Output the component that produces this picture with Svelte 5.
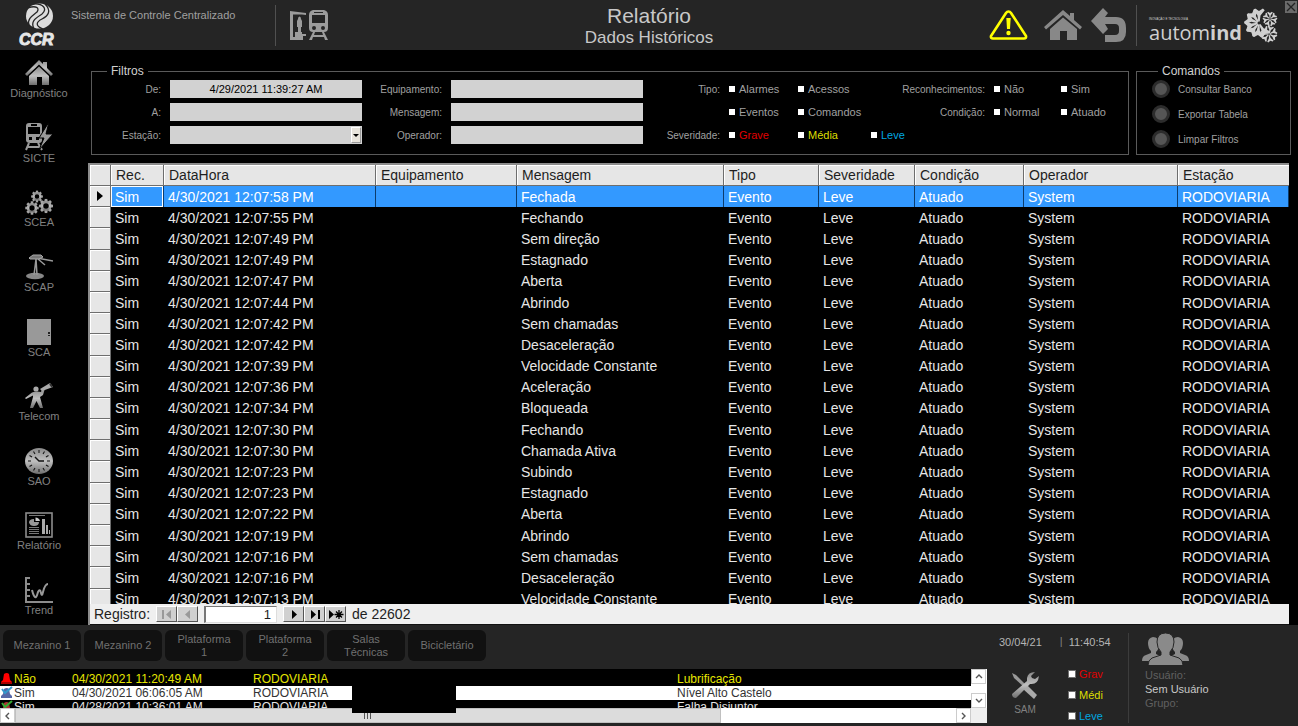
<script>
    let menu = [
        { id: "casa", label: "Diagnóstico" },
        { id: "sicte", label: "SICTE" },
        { id: "scea", label: "SCEA" },
        { id: "scap", label: "SCAP" },
        { id: "sca", label: "SCA" },
        { id: "telecom", label: "Telecom" },
        { id: "sao", label: "SAO" },
        { id: "relatorio", label: "Relatório" },
        { id: "trend", label: "Trend" }
    ]

    let colunas = [
        { nome: "Rec.", largura: 53 },
        { nome: "DataHora", largura: 212 },
        { nome: "Equipamento", largura: 141 },
        { nome: "Mensagem", largura: 207 },
        { nome: "Tipo", largura: 95 },
        { nome: "Severidade", largura: 96 },
        { nome: "Condição", largura: 109 },
        { nome: "Operador", largura: 154 },
        { nome: "Estação", largura: 111 }
    ]

    let eventos = [
        ["12:07:58", "Fechada"],
        ["12:07:55", "Fechando"],
        ["12:07:49", "Sem direção"],
        ["12:07:49", "Estagnado"],
        ["12:07:47", "Aberta"],
        ["12:07:44", "Abrindo"],
        ["12:07:42", "Sem chamadas"],
        ["12:07:42", "Desaceleração"],
        ["12:07:39", "Velocidade Constante"],
        ["12:07:36", "Aceleração"],
        ["12:07:34", "Bloqueada"],
        ["12:07:30", "Fechando"],
        ["12:07:30", "Chamada Ativa"],
        ["12:07:23", "Subindo"],
        ["12:07:23", "Estagnado"],
        ["12:07:22", "Aberta"],
        ["12:07:19", "Abrindo"],
        ["12:07:16", "Sem chamadas"],
        ["12:07:16", "Desaceleração"],
        ["12:07:13", "Velocidade Constante"]
    ]
    let linhas = eventos.map(([hora, msg]) => [
        "Sim", "4/30/2021 " + hora + " PM", "", msg, "Evento", "Leve", "Atuado", "System", "RODOVIARIA"
    ])
    let selecionada = $state(0)

    let areas = ["Mezanino 1", "Mezanino 2", "Plataforma 1", "Plataforma 2", "Salas Técnicas", "Bicicletário"]

    let alarmes = [
        { rec: "Não", data: "04/30/2021 11:20:49 AM", estacao: "RODOVIARIA", msg: "Lubrificação", tipo: "ativo" },
        { rec: "Sim", data: "04/30/2021 06:06:05 AM", estacao: "RODOVIARIA", msg: "Nível Alto Castelo", tipo: "marcado" },
        { rec: "Sim", data: "04/28/2021 10:36:01 AM", estacao: "RODOVIARIA", msg: "Falha Disjuntor", tipo: "normal" }
    ]

    let de = $state("4/29/2021 11:39:27 AM")
    let registro = $state("1")
</script>

{#snippet check(texto, cor)}
    <label class="check {cor}"><input type="checkbox">{texto}</label>
{/snippet}

{#snippet engrenagem(x, y, s)}
    <g transform="translate({x} {y}) scale({s})">
        <circle r="5" fill="none" stroke="url(#metal)" stroke-width="3.4" />
        {#each [0, 45, 90, 135, 180, 225, 270, 315] as a}
            <rect x="-1.6" y="-8.4" width="3.2" height="3" fill="#a5a5a5" transform="rotate({a})" />
        {/each}
    </g>
{/snippet}

{#snippet flor(x, y, s, angulos)}
    <g transform="translate({x} {y}) scale({s})">
        {#each angulos as a}
            <path d="M-.5 -1L-1 -5L-3.800 -8.500L-2.600 -9.600L0 -8L2.600 -9.600L3.800 -8.500L1 -5L.5 -1Z" transform="rotate({a})" />
        {/each}
    </g>
{/snippet}

{#snippet icone(id)}
    {#if id == "casa"}
        <svg width="28" height="26" viewBox="0 0 28 26">
            <path fill="url(#metal)" d="M14 0L18 4V2H22V8L28 14L26 16L14 4.5L2 16L0 14Z" />
            <path fill="url(#metal)" d="M14 6.5L24 16V25H17V17H12V25H4V16Z" />
        </svg>
    {:else if id == "sicte"}
        <svg width="28" height="29" viewBox="0 0 28 29">
            <path fill="#999" fill-rule="evenodd" d="M4 1H14Q17 1 17 4V18Q17 21 14 21H5Q1 21 1 18V4Q1 1 4 1ZM3 5V12H15V5ZM6 2V4H12V2ZM4 15V18H7V15ZM11 15V18H14V15Z" />
            <path stroke="#999" stroke-width="2" d="M4 21L1 28M13 21L17 28M3 25H15" />
            <path fill="#999" stroke="#000" stroke-width="1" d="M24 0L14 16H19L14 28L28 12H21Z" />
        </svg>
    {:else if id == "scea"}
        <svg width="28" height="25" viewBox="0 0 28 25">
            {@render engrenagem(12, 6.5, 0.7)}
            {@render engrenagem(7, 18, 0.8)}
            {@render engrenagem(21, 16, 0.84)}
        </svg>
    {:else if id == "scap"}
        <svg width="28" height="26" viewBox="0 0 28 26">
            <ellipse cx="10" cy="22" rx="9" ry="3.3" fill="#888" />
            <path stroke="#999" fill="none" stroke-width="1.5" d="M9 21L11 5M12 21L11 5M12 4L28 7M13 5L20 11" />
            <path fill="#777" stroke="#aaa" d="M4 4L8 1H16L18 3L14 5H5Z" />
        </svg>
    {:else if id == "sca"}
        <svg width="24" height="26" viewBox="0 0 24 26">
            <rect width="24" height="26" fill="#999" />
            <path fill="#222" d="M21 13h2v2h-2zM21 16h2v1h-2z" />
        </svg>
    {:else if id == "telecom"}
        <svg width="28" height="26" viewBox="0 0 28 26">
            <circle cx="11" cy="6" r="2.6" fill="#aaa" />
            <path fill="url(#metal)" d="M0 15L7 9.5Q11 8 16 9L17 6L19.500 7L18 12L15 14L18 25H15L11.500 18L8 25H5L8 14V12.500L1 16Z" />
            <path fill="#aaa" d="M15 6L25 0L28 4L17 8Z" />
            <ellipse cx="26" cy="2.5" rx="1" ry="2.3" fill="#333" transform="rotate(-35 26 2.500)" />
        </svg>
    {:else if id == "sao"}
        <svg width="28" height="26" viewBox="0 0 28 26">
            <ellipse cx="14" cy="13" rx="14" ry="13" fill="url(#metal)" />
            {#each [0, 30, 60, 90, 120, 150, 180, 210, 240, 270, 300, 330] as a}
                <path d="M14 2V5" stroke="#111" transform="rotate({a} 14 13)" />
            {/each}
            <path d="M10 9L14 13H19" stroke="#111" stroke-width="1.400" fill="none" />
        </svg>
    {:else if id == "relatorio"}
        <svg width="28" height="26" viewBox="0 0 28 26">
            <rect x="1" y="1" width="26" height="24" fill="none" stroke="#8c8c8c" stroke-width="1.600" />
            <path stroke="#777" d="M4 3.500H20M4 15.500H14M4 17.500H14M4 19.500H14M4 21.500H14" />
            <path fill="#999" d="M9 7Q4 7 4 10.500Q5 14 9 14Q14 14 14 10H9Z" />
            <path fill="#ccc" d="M10.500 5.500Q14 5.500 15 9H10.500Z" />
            <path fill="#aaa" d="M17 7H20V22H17ZM21 13H23V22H21ZM24 18H25V22H24Z" />
        </svg>
    {:else if id == "trend"}
        <svg width="28" height="26" viewBox="0 0 28 26">
            <path stroke="#8c8c8c" stroke-width="2" fill="none" d="M1 0V25H28M1 1H5M1 7H5M1 13H5M1 19H5" />
            <path stroke="#999" stroke-width="2" fill="none" d="M7 13Q9 21 11 20Q12 19 13 15Q15 11 16 16Q17 20 18 15Q20 7 23 7" />
        </svg>
    {/if}
{/snippet}

<svg class="defs" width="0" height="0" aria-hidden="true">
    <linearGradient id="metal" x1="0" y1="0" x2="0" y2="1">
        <stop offset="0" stop-color="#8a8a8a" />
        <stop offset="0.5" stop-color="#c0c0c0" />
        <stop offset="1" stop-color="#6e6e6e" />
    </linearGradient>
</svg>

<div class="tela">
    <header>
        <div class="marca">
            <svg width="40" height="44" viewBox="0 0 40 44" aria-label="CCR">
                <ellipse cx="21.500" cy="13" rx="13.500" ry="12.600" fill="#dcdcdc" />
                <g fill="none" stroke="#252525" stroke-width="1.300">
                    <path d="M15 1C25 0 30 6 24 11C18 15 12 18 16 26" />
                    <path d="M27 1C34 8 30 13 24 16C18 19 17 23 25 26" />
                    <path d="M10 5C18 2 22 5 19 9C14 13 9 16 11 22" />
                </g>
                <text x="1" y="42" font-size="16" class="ccr">CCR</text>
            </svg>
            <span>Sistema de Controle Centralizado</span>
        </div>
        <div class="estacao">
            <svg width="39" height="32" viewBox="0 0 39 32">
                <path fill="#9c9c9c" fill-rule="evenodd" d="M0 1L16 3V5L12 4.500H3V27H5V22H12V24H16V26H13V30H0Z" />
                <path fill="#9c9c9c" d="M8 9Q8 6.500 9.500 6.500Q11 6.500 11 9L12 11V17H11V22H8V17H7V11Z" />
                <path fill="#9c9c9c" fill-rule="evenodd" d="M23 0H34Q38 1 38 5V18Q38 22 34 22L38 30H35L34 27H23L22 30H19L23 22Q19 22 19 18V5Q19 1 23 0ZM22 5V13H35V5ZM24 2V3H33V2ZM24 16A2 2 0 1 0 24 20A2 2 0 1 0 24 16ZM33 16A2 2 0 1 0 33 20A2 2 0 1 0 33 16ZM25 22L24 25H33L32 22Z" />
            </svg>
        </div>
        <div class="titulo">
            <h1>Relatório</h1>
            <h2>Dados Históricos</h2>
        </div>
        <nav class="acoes">
            <button class="alerta" aria-label="Alarmes">
                <svg width="39" height="32" viewBox="0 0 39 32">
                    <path d="M19.500 2.500Q21 2.500 22 4L37 27Q37.500 29.500 35 29.500H4Q1.500 29.500 2 27L17 4Q18 2.500 19.500 2.500Z" fill="none" stroke="#ff0" stroke-width="2.600" />
                    <path d="M17.300 9H21.700L21 20H18Z" fill="#ff0" />
                    <circle cx="19.500" cy="24" r="2.200" fill="#ff0" />
                </svg>
            </button>
            <button aria-label="Início">
                <svg width="38" height="30" viewBox="0 0 38 30" fill="#888">
                    <path d="M19 0L26 6V3H30V10L38 17L36 19.500L19 5L2 19.500L0 17Z" />
                    <path d="M19 7.500L33 19V30H23V21H16V30H6V19Z" />
                </svg>
            </button>
            <button class="voltar" aria-label="Voltar">
                <svg width="36" height="35" viewBox="0 0 36 35" fill="#888">
                    <path d="M12 0L17 5L14 9H25Q35 9 35 20V24Q35 34 25 34H14V27H24Q28 27 28 23V20Q28 16 24 16H14L17 21L12 26L0 13Z" />
                </svg>
            </button>
            <div class="automind">
                <div>
                    <small>INOVAÇÃO E TECNOLOGIA</small>
                    <p>autom<b>ind</b></p>
                </div>
                <svg width="36" height="36" viewBox="0 0 36 36" fill="#d0d0d0">
                    {@render flor(17, 16, 1.5, [150, 185, 220, 255, 290, 325, 0])}
                    {@render flor(28, 12, 0.75, [0, 51, 103, 154, 206, 257, 309])}
                    {@render flor(27, 27, 0.85, [15, 66, 118, 169, 221, 272, 324])}
                </svg>
            </div>
        </nav>
        <button class="fechar" aria-label="Fechar">
            <svg width="12" height="12" viewBox="0 0 12 12"><path d="M2 2L10 10M10 2L2 10" stroke="#222" stroke-width="1.300" /></svg>
        </button>
    </header>

    <div class="corpo">
        <nav class="menu">
            {#each menu as item}
                <button>
                    {@render icone(item.id)}
                    <span>{item.label}</span>
                </button>
            {/each}
        </nav>

        <main>
            <div class="topo">
                <fieldset class="filtros">
                    <legend>Filtros</legend>
                    <div class="campos">
                        <label for="de">De:</label>
                        <input id="de" class="data" type="text" bind:value={de}>
                        <label for="a">A:</label>
                        <input id="a" class="data" type="text">
                        <label for="est">Estação:</label>
                        <div class="combo">
                            <select id="est"><option></option></select>
                            <span class="seta"></span>
                        </div>
                    </div>
                    <div class="campos meio">
                        <label for="eq">Equipamento:</label>
                        <input id="eq" type="text">
                        <label for="msg">Mensagem:</label>
                        <input id="msg" type="text">
                        <label for="op">Operador:</label>
                        <input id="op" type="text">
                    </div>
                    <div class="opcoes tipos">
                        <span class="rotulo">Tipo:</span>
                        {@render check("Alarmes", "")}
                        {@render check("Acessos", "")}
                        <span></span>
                        <span></span>
                        {@render check("Eventos", "")}
                        {@render check("Comandos", "")}
                        <span></span>
                        <span class="rotulo">Severidade:</span>
                        {@render check("Grave", "grave")}
                        {@render check("Média", "media")}
                        {@render check("Leve", "leve")}
                    </div>
                    <div class="opcoes estados">
                        <span class="rotulo">Reconhecimentos:</span>
                        {@render check("Não", "")}
                        {@render check("Sim", "")}
                        <span class="rotulo">Condição:</span>
                        {@render check("Normal", "")}
                        {@render check("Atuado", "")}
                    </div>
                </fieldset>

                <fieldset class="comandos">
                    <legend>Comandos</legend>
                    <button><i></i>Consultar Banco</button>
                    <button><i></i>Exportar Tabela</button>
                    <button><i></i>Limpar Filtros</button>
                </fieldset>
            </div>

            <div class="grade">
                <div class="rolagem">
                    <table>
                        <colgroup>
                            <col style="width: 21px">
                            {#each colunas as c}
                                <col style="width: {c.largura}px">
                            {/each}
                        </colgroup>
                        <thead>
                            <tr>
                                <th></th>
                                {#each colunas as c}
                                    <th>{c.nome}</th>
                                {/each}
                            </tr>
                        </thead>
                        <tbody>
                            {#each linhas as linha, i}
                                <tr class:sel={i == selecionada} onclick={() => (selecionada = i)}>
                                    <th>{#if i == selecionada}<span class="ponteiro"></span>{/if}</th>
                                    {#each linha as valor}
                                        <td>{valor}</td>
                                    {/each}
                                </tr>
                            {/each}
                        </tbody>
                    </table>
                </div>
                <div class="navegador">
                    <label for="reg">Registro:</label>
                    <div class="grupo">
                        <button disabled aria-label="Primeiro"><svg width="12" height="9" viewBox="0 0 12 9"><path d="M1 0h2v9H1zM10 0v9L5 4.500z" /></svg></button>
                        <button disabled aria-label="Anterior"><svg width="12" height="9" viewBox="0 0 12 9"><path d="M8 0v9L3 4.500z" /></svg></button>
                    </div>
                    <input id="reg" type="text" bind:value={registro}>
                    <div class="grupo">
                        <button aria-label="Próximo"><svg width="12" height="9" viewBox="0 0 12 9"><path d="M4 0v9L9 4.500z" /></svg></button>
                        <button aria-label="Último"><svg width="12" height="9" viewBox="0 0 12 9"><path d="M2 0v9L7 4.500zM9 0h2v9H9z" /></svg></button>
                        <button aria-label="Novo"><svg width="16" height="9" viewBox="0 0 16 9"><path d="M1 0v9L6 4.500z" /><path d="M11 0V9M6.500 4.500H15.500M8 1.500L14 7.500M14 1.500L8 7.500" stroke="#000" stroke-width="1.300" /></svg></button>
                    </div>
                    <span>de 22602</span>
                </div>
            </div>
        </main>
    </div>

    <footer>
        <div class="esquerda">
            <div class="areas">
                {#each areas as area}
                    <button>{area}</button>
                {/each}
            </div>
            <div class="alarmes">
                <div class="lista">
                    {#each alarmes as al}
                        <div class="alarme {al.tipo}">
                            <svg width="13" height="13" viewBox="0 0 13 13">
                                {#if al.tipo == "ativo"}
                                    <path fill="#f00" d="M4 2Q7 0 9 2L10 8L12 10V12H1V10L3 8Z" /><path fill="#a00" d="M1 10H12V12H1Z" />
                                {:else}
                                    <path fill={al.tipo == "marcado" ? "#5668a8" : "#a33"} d="M4 3Q7 1 9 3L10 8L12 10V12H1V10L3 8Z" />
                                    <path fill="none" stroke={al.tipo == "marcado" ? "#39c" : "#3a3"} stroke-width="2" d="M2 3L5 7L12 1" />
                                {/if}
                            </svg>
                            <span>{al.rec}</span>
                            <span>{al.data}</span>
                            <span>{al.estacao}</span>
                            <span>{al.msg}</span>
                        </div>
                    {/each}
                </div>
                <div class="vertical">
                    <button aria-label="Subir"><svg width="8" height="5" viewBox="0 0 8 5"><path d="M1 4L4 1L7 4" /></svg></button>
                    <button aria-label="Descer"><svg width="8" height="5" viewBox="0 0 8 5"><path d="M1 1L4 4L7 1" /></svg></button>
                </div>
                <div class="horizontal">
                    <button aria-label="Esquerda"><svg width="5" height="8" viewBox="0 0 5 8"><path d="M4 1L1 4L4 7" /></svg></button>
                    <div class="trilho"><div class="polegar"><i></i></div></div>
                    <button aria-label="Direita"><svg width="5" height="8" viewBox="0 0 5 8"><path d="M1 1L4 4L1 7" /></svg></button>
                </div>
                <div class="canto"></div>
                <div class="tarja"></div>
            </div>
        </div>

        <div class="direita">
            <div class="relogio"><span>30/04/21</span><span class="barra">|</span><span>11:40:54</span></div>
            <button class="sam">
                <svg width="29" height="28" viewBox="0 0 29 28">
                    <path fill="#999" d="M1 1L5 3L15 13L13 15L3 6Z" />
                    <path fill="#aaa" d="M15 12L26 23L23 27L12 17Z" />
                    <path fill="url(#metal)" d="M28 4L24 7L21 6L20 4L24 0Q17 0 16 6V9L1 22Q1 26 5 26L19 12Q27 13 28 4Z" />
                </svg>
                <span>SAM</span>
            </button>
            <div class="niveis">
                {@render check("Grav", "grave")}
                {@render check("Médi", "media")}
                {@render check("Leve", "leve")}
            </div>
            <div class="usuario">
                <svg width="47" height="33" viewBox="0 0 47 33" fill="#8a8a8a">
                    <path d="M11 4Q17 4 17 11Q17 16 14 19V21L20 24V28H0Q0 23 4 22L9 20V18Q6 15 6 10Q6 5 11 4Z" />
                    <path d="M36 4Q41 5 41 10Q41 15 38 18V20L43 22Q47 23 47 28H27V24L33 21V19Q30 16 30 11Q30 4 36 4Z" />
                    <path stroke="#252525" d="M23.500 0Q32 0 32 9Q32 15 28 19V22L37 25Q41 27 41 32.500H6Q6 27 10 25L19 22V19Q15 15 15 9Q15 0 23.500 0Z" />
                </svg>
                <span>Usuário:</span>
                <strong>Sem Usuário</strong>
                <span>Grupo:</span>
            </div>
        </div>
    </footer>
</div>

<style>
    :global(body){
        margin: 0;
        background-color: black;
    }
    .tela{
        height: 100vh;
        min-height: 640px;
        display: flex;
        flex-direction: column;
        background-color: black;
        color: #a0a0a0;
        font-family: "Liberation Sans", Arial, sans-serif;
        font-size: 11px;
    }
    .tela *{
        box-sizing: border-box;
    }
    .defs{
        position: absolute;
    }
    svg{
        display: block;
        flex: none;
    }
    button, input, select{
        font: inherit;
        color: inherit;
        border: none;
        border-radius: 0;
        padding: 0;
        margin: 0;
        background: none;
    }

    /* cabeçalho */
    header{
        position: relative;
        display: grid;
        grid-template-columns: 1fr auto 1fr;
        height: 50px;
        flex: none;
        background-color: #252525;
    }
    .marca{
        grid-area: 1 / 1;
        display: flex;
        gap: 13px;
        padding: 3px 0 0 18px;
    }
    .marca span{
        padding-top: 6px;
    }
    .ccr{
        font-weight: bold;
        font-style: italic;
        fill: #e6e6e6;
        stroke: #e6e6e6;
    }
    .estacao{
        grid-area: 1 / 1;
        align-self: center;
        margin: 0 0 0 275px;
        padding: 5px 0 4px 14px;
        border-left: 1px solid #505050;
    }
    .titulo{
        grid-area: 1 / 2;
        text-align: center;
        color: #c8c8c8;
        padding-top: 4px;
    }
    h1, h2{
        margin: 0;
        font-weight: normal;
    }
    h1{
        font-size: 21px;
        line-height: 24px;
    }
    h2{
        font-size: 17px;
        line-height: 20px;
    }
    .acoes{
        grid-area: 1 / 3;
        display: flex;
        justify-content: flex-end;
        align-items: center;
        padding-right: 20px;
    }
    .alerta{
        margin-right: 16px;
    }
    .voltar{
        margin: 0 9px;
    }
    .automind{
        display: flex;
        align-items: center;
        border-left: 1px solid #505050;
        padding-left: 12px;
        height: 41px;
        color: #d0d0d0;
    }
    .automind small{
        display: block;
        font-size: 3px;
        line-height: 4px;
        padding-top: 12px;
    }
    .automind p{
        margin: 0;
        font-family: "Open Sans", sans-serif;
        font-size: 20px;
        line-height: 24px;
    }
    .fechar{
        position: absolute;
        top: 1px;
        right: 1px;
        background-color: #6a6a6a;
    }

    .corpo{
        flex: 1;
        min-height: 0;
        display: flex;
    }
    .menu{
        width: 88px;
        flex: none;
        display: flex;
        flex-direction: column;
        justify-content: space-between;
        padding: 4px 10px 8px 0;
    }
    .menu button{
        height: 46px;
        display: flex;
        flex-direction: column;
        align-items: center;
        justify-content: flex-end;
        color: #808080;
    }
    .menu span{
        line-height: 14px;
    }

    main{
        flex: 1;
        min-width: 0;
        display: flex;
        flex-direction: column;
        padding: 14px 7px 0 0;
    }
    .topo{
        display: flex;
        gap: 7px;
        padding-left: 3px;
        margin-bottom: 8px;
    }
    fieldset{
        min-width: 0;
        margin: 0;
        border: 1px solid #5a5a5a;
        padding: 2px 0 10px;
    }
    legend{
        font-size: 12px;
        line-height: 14px;
        color: #d0d0d0;
        padding: 0 4px;
    }
    .filtros{
        flex: 1;
        display: flex;
    }
    .filtros legend{
        margin-left: 15px;
    }
    .campos{
        flex: 1 0 78px;
        display: grid;
        grid-template-columns: 69px 1fr;
        grid-auto-rows: 18px;
        gap: 5px 9px;
        align-items: center;
    }
    .meio{
        flex-basis: 89px;
        grid-template-columns: 80px 1fr;
    }
    .campos label, .rotulo{
        font-size: 10px;
        text-align: right;
        white-space: nowrap;
    }
    .campos input, .campos select{
        display: block;
        width: 100%;
        height: 18px;
        min-width: 0;
        color: black;
        background-color: #d2d2d2;
        appearance: none;
    }
    .campos .data{
        text-align: center;
    }
    .combo{
        position: relative;
    }
    .seta{
        position: absolute;
        top: 1px;
        right: 1px;
        bottom: 1px;
        width: 10px;
        background-color: #e8e4dc;
        border: 1px solid #999;
        border-top-color: white;
        border-left-color: white;
        pointer-events: none;
    }
    .seta::after{
        content: "";
        position: absolute;
        top: 6px;
        left: 1px;
        border: 3px solid transparent;
        border-top-color: black;
        border-bottom: none;
    }
    .opcoes{
        display: grid;
        grid-auto-rows: 18px;
        row-gap: 5px;
        align-items: center;
    }
    .opcoes .rotulo{
        padding-right: 9px;
    }
    .tipos{
        grid-template-columns: 86px 69px 73px 31px;
    }
    .estados{
        grid-template-columns: 92px 67px 67px;
    }
    .check{
        display: flex;
        align-items: center;
        gap: 4px;
        white-space: nowrap;
    }
    .check input{
        appearance: none;
        flex: none;
        width: 6px;
        height: 6px;
        background-color: white;
    }
    .check input:checked{
        box-shadow: inset 0 0 0 2px #333;
    }
    .grave{
        color: #e00000;
    }
    .media{
        color: #dede00;
    }
    .leve{
        color: #00a8e0;
    }
    .comandos{
        width: 155px;
        flex: none;
        display: flex;
        flex-direction: column;
        gap: 7px;
        padding-bottom: 6px;
    }
    .comandos legend{
        margin-left: 21px;
    }
    .comandos button{
        display: flex;
        align-items: center;
        gap: 8px;
        padding-left: 15px;
        font-size: 10px;
        height: 18px;
    }
    .comandos i{
        width: 18px;
        height: 18px;
        border-radius: 50%;
        background-color: #555;
        border: 3px solid #2c2c2c;
    }

    /* grade de eventos */
    .grade{
        flex: 1;
        min-height: 0;
        display: flex;
        flex-direction: column;
        margin-right: 2px;
        border: 2px solid #8c8c8c;
        border-right: none;
        border-bottom: none;
    }
    .rolagem{
        flex: 1;
        min-height: 0;
        overflow: hidden;
    }
    table{
        width: 100%;
        height: 445px;
        table-layout: fixed;
        border-collapse: separate;
        border-spacing: 0;
        font-size: 14px;
        line-height: 18px;
        color: #e6e6e6;
    }
    th, td{
        height: 21px;
        padding: 0 0 0 4px;
        text-align: left;
        font-weight: normal;
        white-space: nowrap;
    }
    th{
        background-color: #e6e6e6;
        color: #1e1e1e;
        padding-left: 5px;
        border-right: 1px solid #6e6e6e;
        border-bottom: 1px solid #6e6e6e;
        box-shadow: inset 1px 1px white;
    }
    thead th:last-child{
        border-right: none;
    }
    .sel td{
        background-color: #3399ff;
        color: white;
        border-right: 1px solid #0c3c6c;
    }
    .sel td:nth-child(2){
        box-shadow: inset 0 0 0 1px white;
    }
    .ponteiro{
        display: block;
        width: 0;
        border: 5px solid transparent;
        border-left: 6px solid black;
        border-right: none;
        margin-left: 2px;
    }
    .navegador{
        flex: none;
        display: flex;
        align-items: center;
        gap: 6px;
        height: 21px;
        padding-left: 4px;
        border-bottom: 1px solid #111;
        background-color: #efefef;
        color: #1e1e1e;
        font-size: 14px;
    }
    .navegador input{
        width: 73px;
        height: 17px;
        padding-right: 5px;
        text-align: right;
        font-size: 13px;
        background-color: white;
        border: 1px solid #ddd;
        border-top-color: #777;
        border-left: 2px solid #777;
    }
    .grupo{
        display: flex;
    }
    .grupo button{
        width: 21px;
        height: 16px;
        display: flex;
        align-items: center;
        justify-content: center;
        background-color: #d0d0d0;
        border: 1px solid #555;
        border-top-color: white;
        border-left-color: white;
    }
    .grupo button:disabled path{
        fill: #999;
    }

    /* rodapé */
    footer{
        flex: none;
        display: flex;
        background-color: #252525;
    }
    .esquerda{
        flex: 1;
        min-width: 0;
        padding-bottom: 3px;
    }
    .areas{
        display: flex;
        gap: 3px;
        padding: 5px 3px 8px;
    }
    .areas button{
        width: 78px;
        height: 31px;
        padding: 0 10px;
        border-radius: 6px;
        background-color: #111;
        color: #707070;
        line-height: 13px;
    }
    .alarmes{
        position: relative;
        display: grid;
        grid-template-columns: 1fr 16px;
        grid-template-rows: 39px 15px;
    }
    .lista{
        overflow: hidden;
        padding-top: 3px;
        background-color: black;
    }
    .alarme{
        display: grid;
        grid-template-columns: 14px 58px 181px 424px 1fr;
        height: 14px;
        line-height: 14px;
        font-size: 12px;
        white-space: nowrap;
        color: #e6e6e6;
    }
    .alarme.ativo{
        color: #e6e600;
    }
    .alarme.marcado{
        color: #333;
        background-color: white;
    }
    .vertical{
        display: flex;
        flex-direction: column;
        justify-content: space-between;
        background-color: white;
    }
    .vertical button, .horizontal button{
        width: 15px;
        height: 15px;
        display: flex;
        align-items: center;
        justify-content: center;
        background-color: white;
        border: 1px solid #ccc;
    }
    .vertical path, .horizontal path{
        fill: none;
        stroke: #555;
        stroke-width: 1.4px;
    }
    .horizontal{
        display: flex;
        background-color: white;
    }
    .trilho{
        flex: 1;
    }
    .polegar{
        width: 75%;
        height: 15px;
        display: flex;
        align-items: center;
        justify-content: center;
        background-color: #dcdcdc;
        border: 1px solid #c0c0c0;
    }
    .polegar i{
        width: 7px;
        height: 7px;
        background: repeating-linear-gradient(to right, #555 0 1px, transparent 1px 3px);
    }
    .canto{
        background-color: #efefef;
    }
    .tarja{
        position: absolute;
        left: 352px;
        top: 16px;
        width: 104px;
        height: 28px;
        background-color: black;
    }

    .direita{
        width: 311px;
        flex: none;
        display: grid;
        grid-template-columns: 82px 59px 1fr;
        grid-template-rows: 34px 1fr;
        padding: 8px 0 3px;
    }
    .relogio{
        grid-area: 1 / 1 / 2 / 3;
        display: flex;
        padding: 3px 0 0 12px;
        color: #b4b4b4;
    }
    .barra{
        padding: 0 6px 0 18px;
        line-height: 10px;
        color: #808080;
    }
    .sam{
        grid-area: 2 / 1;
        align-self: start;
        justify-self: center;
        display: flex;
        flex-direction: column;
        align-items: center;
        gap: 4px;
        padding-top: 5px;
        margin-right: 6px;
        font-size: 10px;
        color: #808080;
    }
    .niveis{
        grid-area: 2 / 2;
        display: flex;
        flex-direction: column;
        gap: 7px;
    }
    .niveis :global(.check){
        line-height: 14px;
    }
    .niveis :global(input){
        outline: 1px solid #707070;
    }
    .usuario{
        grid-area: 1 / 3 / 3 / 4;
        display: flex;
        flex-direction: column;
        border-left: 1px solid #3c3c3c;
        padding-left: 16px;
        line-height: 14px;
        color: #606060;
    }
    .usuario svg{
        margin: 0 0 2px -3px;
    }
    .usuario strong{
        font-weight: normal;
        color: #c8c8c8;
    }
</style>
